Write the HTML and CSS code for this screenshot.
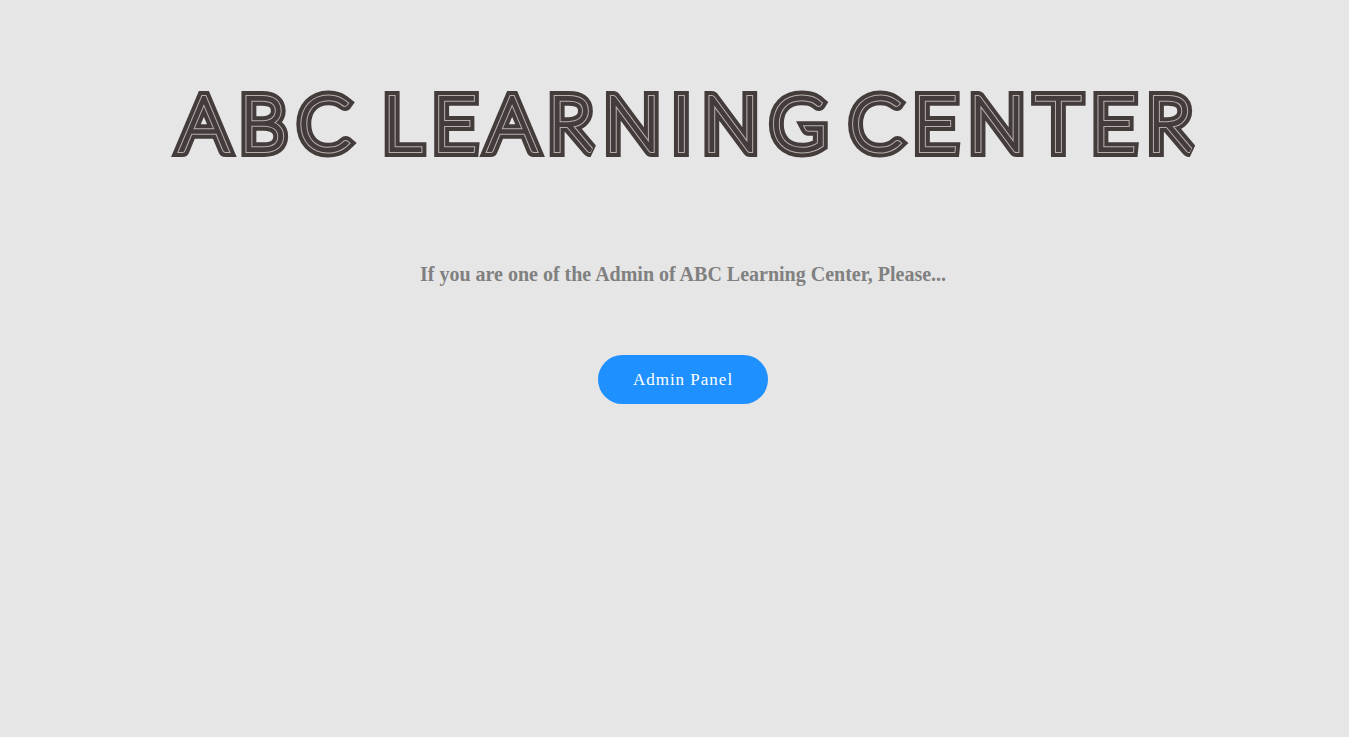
FILE: index.html
```html
<!DOCTYPE html>
<html lang="en">
<head>
<meta charset="utf-8">
<meta name="viewport" content="width=device-width, initial-scale=1">
<title>ABC Learning Center</title>
<link rel="stylesheet" href="styles.css">
</head>
<body>
<main class="welcome">
  <h1 class="title">
    <svg class="wordmark" viewBox="0 0 1080 112" role="img" aria-label="ABC Learning Center">
      <g class="band-outer">
        <text id="letters" y="82"><tspan x="37">ABC</tspan> <tspan x="240">LEARNING</tspan> <tspan x="707">CENTER</tspan></text>
      </g>
      <use class="band-line" href="#letters"/>
      <use class="band-inner" href="#letters"/>
    </svg>
  </h1>
  <p class="prompt">If you are one of the Admin of ABC Learning Center, Please...</p>
  <button class="admin-button" type="button">Admin Panel</button>
</main>
</body>
</html>
```
FILE: styles.css
```css
body {
  margin: 0;
  background: #e6e6e6;
  font-family: "Liberation Serif", "Times New Roman", serif;
}

.welcome {
  display: flex;
  flex-direction: column;
  align-items: center;
  padding: 68px 0 80px 17px;
  text-align: center;
}

.title {
  width: 100%;
  max-width: 1080px;
  margin: 0;
}

/* Striped lettering: a hairline face with three strokes stacked on it. */
.wordmark {
  display: block;
  width: 100%;
  font: 100 75px Lato, sans-serif;
  letter-spacing: 12px;
  fill: #433c3b;
  stroke-linejoin: miter;
  stroke-miterlimit: 2;
}

.band-outer {
  stroke: #433c3b;
  stroke-width: 14px;
}

.band-line {
  stroke: #b5b0ae;
  stroke-width: 6px;
}

.band-inner {
  stroke: #433c3b;
  stroke-width: 4px;
}

.prompt {
  margin: 80px 0 0;
  font-size: 20px;
  font-weight: bold;
  line-height: 28px;
  color: #808080;
}

.admin-button {
  margin-top: 67px;
  padding: 14px 35px;
  border: 0;
  border-radius: 25px;
  background: #1e90ff;
  color: #fff;
  font: 17px/21px "Liberation Serif", "Times New Roman", serif;
  letter-spacing: 1px;
  cursor: pointer;
}
```
